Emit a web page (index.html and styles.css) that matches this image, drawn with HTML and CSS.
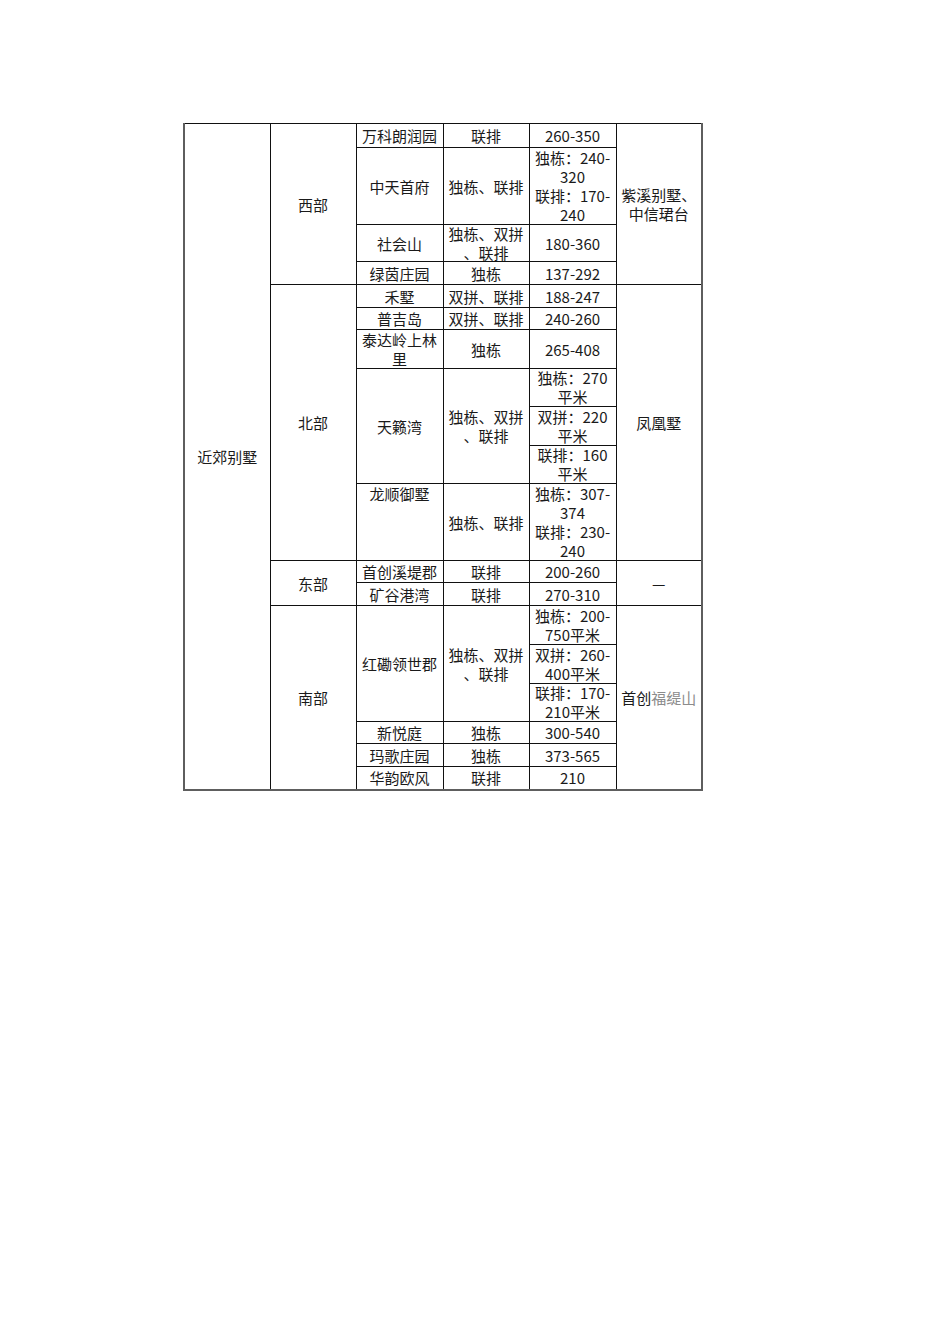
FILE: index.html
```html
<!DOCTYPE html>
<html lang="zh-CN">
<head>
<meta charset="utf-8">
<title>近郊别墅</title>
<link rel="stylesheet" href="styles.css">
</head>
<body>
<table class="grid">
  <colgroup>
    <col class="c1"><col class="c2"><col class="c3"><col class="c4"><col class="c5"><col class="c6">
  </colgroup>
  <tr class="h24">
    <td rowspan="19" class="edge-l">近郊别墅</td>
    <td rowspan="4">西部</td>
    <td>万科朗润园</td>
    <td>联排</td>
    <td>260-350</td>
    <td rowspan="4" class="edge-r">紫溪别墅、<br>中信珺台</td>
  </tr>
  <tr class="h77">
    <td>中天首府</td>
    <td>独栋、联排</td>
    <td>独栋：240-<br>320<br>联排：170-<br>240</td>
  </tr>
  <tr class="h37">
    <td>社会山</td>
    <td><div class="pull2">独栋、双拼<br>、联排</div></td>
    <td>180-360</td>
  </tr>
  <tr class="h23">
    <td>绿茵庄园</td>
    <td>独栋</td>
    <td>137-292</td>
  </tr>
  <tr class="h23">
    <td rowspan="7">北部</td>
    <td>禾墅</td>
    <td>双拼、联排</td>
    <td>188-247</td>
    <td rowspan="7" class="edge-r">凤凰墅</td>
  </tr>
  <tr class="h22">
    <td>普吉岛</td>
    <td>双拼、联排</td>
    <td>240-260</td>
  </tr>
  <tr class="h39">
    <td>泰达岭上林<br>里</td>
    <td>独栋</td>
    <td>265-408</td>
  </tr>
  <tr class="h38">
    <td rowspan="3">天籁湾</td>
    <td rowspan="3">独栋、双拼<br>、联排</td>
    <td><div class="pull1">独栋：270<br>平米</div></td>
  </tr>
  <tr class="h39">
    <td>双拼：220<br>平米</td>
  </tr>
  <tr class="h38">
    <td><div class="pull1">联排：160<br>平米</div></td>
  </tr>
  <tr class="h77">
    <td class="top">龙顺御墅</td>
    <td>独栋、联排</td>
    <td>独栋：307-<br>374<br>联排：230-<br>240</td>
  </tr>
  <tr class="h22">
    <td rowspan="2">东部</td>
    <td>首创溪堤郡</td>
    <td>联排</td>
    <td>200-260</td>
    <td rowspan="2" class="edge-r">—</td>
  </tr>
  <tr class="h23">
    <td>矿谷港湾</td>
    <td>联排</td>
    <td>270-310</td>
  </tr>
  <tr class="h39">
    <td rowspan="6" class="edge-b">南部</td>
    <td rowspan="3">红磡领世郡</td>
    <td rowspan="3">独栋、双拼<br>、联排</td>
    <td>独栋：200-<br>750平米</td>
    <td rowspan="6" class="edge-r edge-b">首创<span class="faded">福缇山</span></td>
  </tr>
  <tr class="h39">
    <td>双拼：260-<br>400平米</td>
  </tr>
  <tr class="h38">
    <td><div class="pull1">联排：170-<br>210平米</div></td>
  </tr>
  <tr class="h22">
    <td>新悦庭</td>
    <td>独栋</td>
    <td>300-540</td>
  </tr>
  <tr class="h23">
    <td>玛歌庄园</td>
    <td>独栋</td>
    <td>373-565</td>
  </tr>
  <tr class="h23 last">
    <td class="edge-b">华韵欧风</td>
    <td class="edge-b">联排</td>
    <td class="edge-b">210</td>
  </tr>
</table>
</body>
</html>
```

FILE: styles.css
```css
html, body {
  margin: 0;
  padding: 0;
  background: #ffffff;
}

body {
  padding: 123px 0 0 183px;
  font-family: "Noto Sans CJK SC", "Noto Sans", sans-serif;
  font-size: 15px;
  line-height: 19px;
  color: #1a1a1a;
}

.grid {
  border-collapse: collapse;
  table-layout: fixed;
  width: 518px;
  border-top: 1px solid #222;
}

.c1 { width: 86px; }
.c2 { width: 86px; }
.c3 { width: 87px; }
.c4 { width: 86px; }
.c5 { width: 87px; }
.c6 { width: 86px; }

.grid td {
  border: 1px solid #111;
  padding: 0;
  text-align: center;
  vertical-align: middle;
  white-space: nowrap;
  overflow: hidden;
}

/* two-line cells squeezed into rows slightly shorter than 2 × line-height */
.pull1 {
  margin-top: -1px;
}

.pull2 {
  margin-top: -1px;
  margin-bottom: -1px;
}

.grid td.top {
  vertical-align: top;
}

.grid td.edge-l {
  border-left: 2px solid #5e5e5e;
  border-bottom: 2px solid #5e5e5e;
}

.grid td.edge-r {
  border-right: 2px solid #5e5e5e;
}

.grid td.edge-b {
  border-bottom: 2px solid #5e5e5e;
}

.faded {
  color: #8c8c8c;
}

.h22 { height: 22px; }
.h23 { height: 23px; }
.h24 { height: 24px; }
.h37 { height: 37px; }
.h38 { height: 38px; }
.h39 { height: 39px; }
.h77 { height: 77px; }
```
